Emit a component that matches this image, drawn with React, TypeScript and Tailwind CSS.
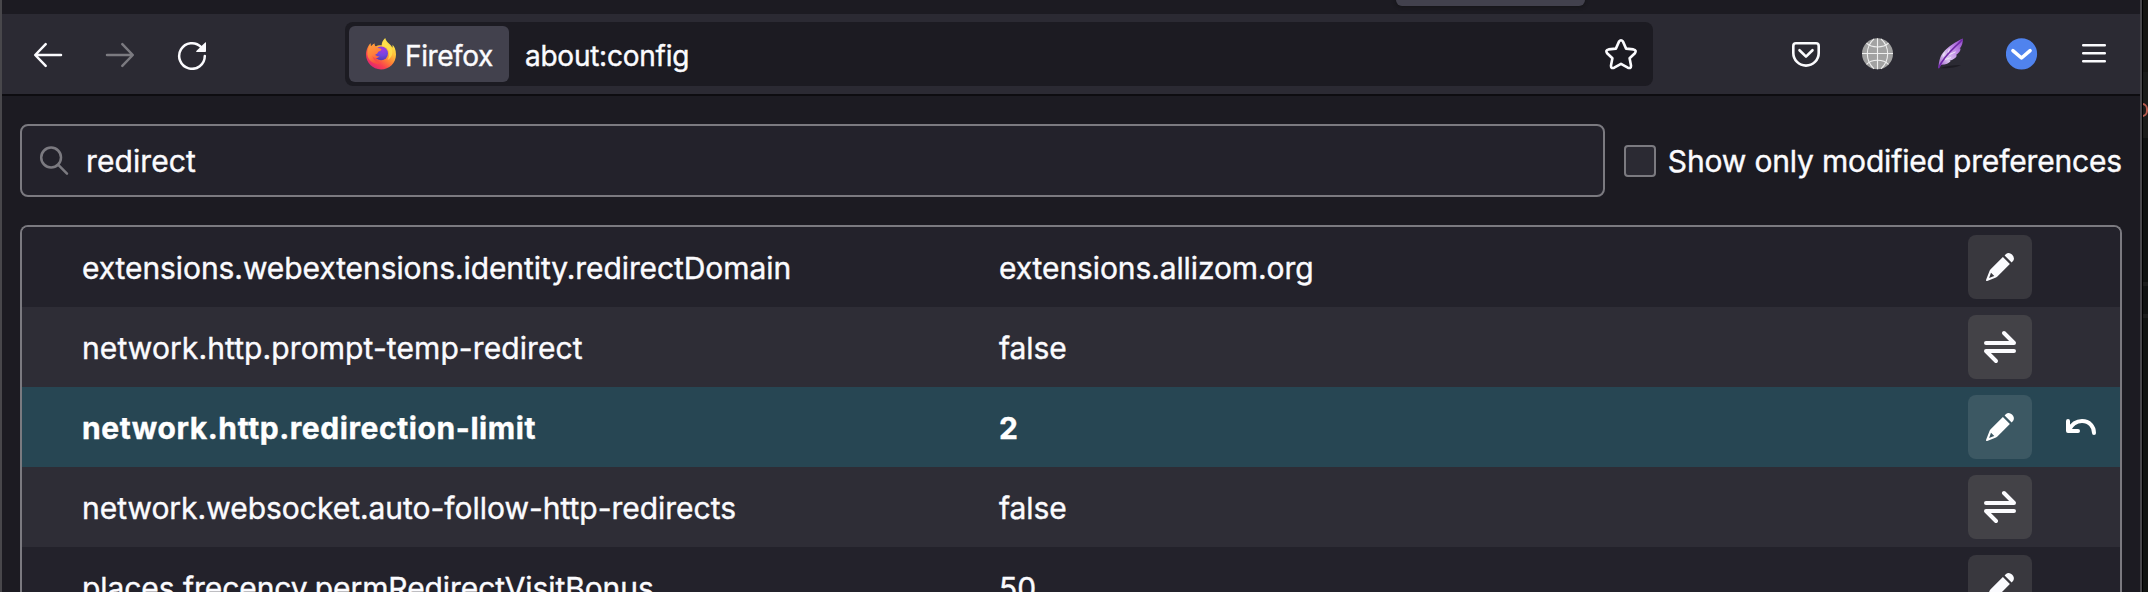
import React from 'react';

type Kind = 'edit' | 'toggle';

interface Pref {
  name: string;
  value: string;
  kind: Kind;
  modified?: boolean;
  spacing: string;
}

const prefs: Pref[] = [
  { name: 'extensions.webextensions.identity.redirectDomain', value: 'extensions.allizom.org', kind: 'edit', spacing: 'tracking-[-0.08px]' },
  { name: 'network.http.prompt-temp-redirect', value: 'false', kind: 'toggle', spacing: 'tracking-[0.1px]' },
  { name: 'network.http.redirection-limit', value: '2', kind: 'edit', modified: true, spacing: 'tracking-[0.58px]' },
  { name: 'network.websocket.auto-follow-http-redirects', value: 'false', kind: 'toggle', spacing: 'tracking-[-0.02px]' },
  { name: 'places.frecency.permRedirectVisitBonus', value: '50', kind: 'edit', spacing: 'tracking-[-0.08px]' },
];

function BackIcon() {
  return (
    <svg className="size-8" viewBox="0 0 32 32" fill="none" stroke="currentColor" strokeWidth="2.5" strokeLinecap="round" strokeLinejoin="round">
      <path d="M29 17H3.5M13.7 6.2L3.2 17L13.7 27.8" />
    </svg>
  );
}

function ForwardIcon() {
  return (
    <svg className="size-8" viewBox="0 0 32 32" fill="none" stroke="currentColor" strokeWidth="2.5" strokeLinecap="round" strokeLinejoin="round">
      <path d="M3 17H28.5M18.3 6.2L28.8 17L18.3 27.8" />
    </svg>
  );
}

function ReloadIcon() {
  return (
    <svg className="size-8" viewBox="0 0 32 32" fill="none">
      <path d="M28.8 18A12.8 12.8 0 1 1 25.2 9.1" stroke="currentColor" strokeWidth="2.5" strokeLinecap="round" />
      <path d="M20.8 14H29.2Q30 14 30 13.2V4.6Q30 3.8 29.2 4.5L20.3 12.9Q19.6 14 20.8 14Z" fill="currentColor" />
    </svg>
  );
}

function FirefoxLogo() {
  return (
    <svg className="h-8 w-[30px]" viewBox="0 0 30 32">
      <defs>
        <linearGradient id="ff-body" x1="0.85" y1="0.05" x2="0.2" y2="0.95">
          <stop offset="0" stopColor="#fff44f" />
          <stop offset="0.32" stopColor="#ffc13a" />
          <stop offset="0.55" stopColor="#ff8235" />
          <stop offset="0.78" stopColor="#f9404f" />
          <stop offset="1" stopColor="#dd2276" />
        </linearGradient>
        <radialGradient id="ff-globe" cx="0.6" cy="0.2" r="0.9">
          <stop offset="0" stopColor="#a438e0" />
          <stop offset="0.5" stopColor="#7245de" />
          <stop offset="1" stopColor="#4a3aa8" />
        </radialGradient>
        <linearGradient id="ff-fox" x1="0" y1="0" x2="0.4" y2="1">
          <stop offset="0" stopColor="#ffa53d" />
          <stop offset="0.6" stopColor="#ff7f3c" />
          <stop offset="1" stopColor="#f9503f" />
        </linearGradient>
      </defs>
      <path d="M19.2 0C17 2 15.5 5 15.7 7.3C12.5 7.2 11 7.6 9.8 8.6C8.8 8 8.2 6.6 8.4 5.4C6.9 6.2 5.8 7.5 5.1 8.6C4.5 7.8 4.5 6 4.6 5.2C2.6 7 0 11.5 0 16.6C0 24.9 6.7 31.4 15 31.4C23.3 31.4 30 24.8 30 16.4C30 11.6 28.2 8.4 26.5 6.8C26.7 7.8 26.7 8.8 26.4 9.7C24.3 5.4 20.2 4.6 19.2 0Z" fill="url(#ff-body)" />
      <circle cx="15.2" cy="15.4" r="6.8" fill="url(#ff-globe)" />
      <path d="M4.7 5.3C4.3 7 4.7 8.2 5.1 8.6C5.8 7.5 6.9 6.2 8.4 5.4C8.2 6.6 8.8 8 9.8 8.6C11.5 10.6 15.6 10.6 15.4 11.4C15.2 13 12.7 13.1 12 14.1C11.8 15.7 10.6 16.2 9 17C10.3 17.3 11.6 18.8 13.6 18.2C10.8 21.4 7.2 20 6.4 17.6C7 22.6 11.8 25.2 16 24.6C10 27.6 2.4 24 1.4 16.8C1 12.2 2.8 8 4.7 5.3Z" fill="url(#ff-fox)" />
      <path d="M19 1C16.6 3.4 16 6 16.4 8.4C19.5 8 24.4 12 23 18C22.6 20 22 21.4 21.4 22C26.6 19.4 27.9 13 24.7 9.4C22.2 6.5 19.6 5 19 1Z" fill="#ffe14d" opacity="0.85" />
    </svg>
  );
}

function StarIcon() {
  return (
    <svg className="size-8" viewBox="0 0 32 32" fill="none" stroke="currentColor" strokeWidth="2.6" strokeLinejoin="round">
      <path d="M14 3.6Q16 .8 18 3.6L21.1 10.6L28.4 11.4Q31.9 12.2 29.9 15.2L24.6 20.3L26 27.6Q26.2 31 22.8 29.7L16 25.9L9.2 29.7Q5.8 31 6 27.6L7.4 20.3L2.1 15.2Q.1 12.2 3.6 11.4L10.9 10.6Z" />
    </svg>
  );
}

function PocketIcon() {
  return (
    <svg className="size-8" viewBox="0 0 32 32" fill="none" stroke="currentColor" strokeWidth="2.6" strokeLinecap="round" strokeLinejoin="round">
      <path d="M6 5.3H26Q28.7 5.3 28.7 8V15A12.7 12.6 0 0 1 3.3 15V8Q3.3 5.3 6 5.3Z" />
      <path d="M9.5 12.2L16 18.6L22.5 12.2" />
    </svg>
  );
}

function GlobeIcon() {
  return (
    <svg className="size-8" viewBox="0 0 32 32" fill="none" stroke="#efefef" strokeWidth="1.1">
      <circle cx="15.5" cy="15.8" r="15.5" fill="#a2a2a2" stroke="none" />
      <path d="M15.5 .3V31.3M0 15.5H31" />
      <path d="M12 .9C3.1 9 3.1 22.5 12 30.8M19 .9C27.9 9 27.9 22.5 19 30.8" />
      <path d="M4.5 5.2C9.5 10.2 21.5 10.2 26.5 5.2M4.5 26.4C9.5 20.8 21.5 20.8 26.5 26.4" />
    </svg>
  );
}

function FeatherIcon() {
  return (
    <svg className="size-8" viewBox="0 0 32 32" fill="none">
      <defs>
        <linearGradient id="feather" x1="1" y1="0" x2="0" y2="1">
          <stop offset="0" stopColor="#8e44c4" />
          <stop offset="0.35" stopColor="#c08ae6" />
          <stop offset="0.65" stopColor="#dcc8ef" />
          <stop offset="1" stopColor="#8a3fc0" />
        </linearGradient>
      </defs>
      <path d="M6 30C12 30.6 22 29.8 27 27C20 27 12 28 6 30Z" fill="#1d1c23" />
      <path d="M28.7 .6C22 3.6 14 9 9.2 14.4C5.4 19 5 24 4.2 30.8L7.4 26.8C12 26.4 15 25.2 16.6 23.2L15.6 22.8C19 21.8 21.6 20.2 23 17.4L21.8 17.2C25 15 26.4 13.4 26.6 10.6L25.6 10.8C28 8.4 29.2 4.2 28.7 .6Z" fill="url(#feather)" />
      <path d="M28.4 1.4C22 9 10.6 16 4.6 30" stroke="#6f27a8" strokeWidth="1.5" />
      <path d="M11 21.5L17 19.6M15.4 16.6L21.6 13.8M9 18.5L10.5 14.6M14.4 14.4L15.4 10.6" stroke="#f0e6f8" strokeWidth="1" />
    </svg>
  );
}

function ChevronBadgeIcon() {
  return (
    <svg className="size-8" viewBox="0 0 32 32" fill="none">
      <circle cx="15.5" cy="15.9" r="15.6" fill="#5083ee" />
      <path d="M6.9 12.6L15.5 20L24.1 12.6" stroke="#fff" strokeWidth="3.5" strokeLinecap="round" strokeLinejoin="round" />
    </svg>
  );
}

function MenuIcon() {
  return (
    <svg className="size-8" viewBox="0 0 32 32" stroke="currentColor" strokeWidth="2.5" strokeLinecap="round">
      <path d="M5.2 7.2H26.8M5.2 15.2H26.8M5.2 23.3H26.8" />
    </svg>
  );
}

function SearchIcon() {
  return (
    <svg className="size-8 text-[#7b7a80]" viewBox="0 0 32 32" fill="none" stroke="currentColor" strokeWidth="2.5" strokeLinecap="round">
      <circle cx="13.1" cy="12.5" r="9.9" />
      <path d="M20.3 19.8L29 28.6" />
    </svg>
  );
}

function PencilIcon() {
  return (
    <svg className="size-16" viewBox="0 0 64 64" fill="currentColor">
      <path d="M36.6 20.4L38 19Q41 16.9 44 19.6Q47.1 22.8 45.2 25.8L43.6 27.4Z" />
      <path fillRule="evenodd" d="M34.9 22.1L41.9 29.1L29.4 41.6Q28.8 42.2 28 42.5L19.2 45.9Q17.6 46.3 18.1 44.8L21.5 36Q21.8 35.2 22.4 34.6ZM23 37.7L21.1 42.9L26.3 41Z" />
    </svg>
  );
}

function ToggleIcon() {
  return (
    <svg className="size-16" viewBox="0 0 64 64" fill="none" stroke="currentColor" strokeWidth="4" strokeLinecap="round" strokeLinejoin="round">
      <path d="M18 28H46L36 18M46 36H18L28 46" />
    </svg>
  );
}

function ResetIcon() {
  return (
    <svg className="size-16" viewBox="0 0 64 64" fill="none" stroke="currentColor" strokeWidth="4" strokeLinecap="round" strokeLinejoin="round">
      <path d="M19 26V36H29" />
      <path d="M20 35C23 28.8 28 26 33 26C40.5 26 45 31.5 45 38" />
    </svg>
  );
}

function ToolbarButton({ children, dim }: { children: React.ReactNode; dim?: boolean }) {
  return (
    <button className={`flex size-16 items-center justify-center rounded-lg ${dim ? 'text-[#7b7a80]' : 'text-[#fbfbfe]'}`}>
      {children}
    </button>
  );
}

function Toolbar() {
  return (
    <div className="flex h-[82px] shrink-0 items-center border-b-2 border-[#0d0c10] bg-[#2b2a33] pl-[14px] pr-[14px]">
      <div className="flex gap-2">
        <ToolbarButton><BackIcon /></ToolbarButton>
        <ToolbarButton dim><ForwardIcon /></ToolbarButton>
        <ToolbarButton><ReloadIcon /></ToolbarButton>
      </div>
      <div className="ml-[121px] flex h-16 w-[1308px] items-center rounded-lg bg-[#1c1b22] pl-1 pr-4">
        <div className="flex h-14 w-[160px] items-center rounded-md bg-[#42414d] pl-[17px]">
          <FirefoxLogo />
          <span className="ml-[9px] pt-[3px] text-[28px] tracking-[-0.4px]">Firefox</span>
        </div>
        <span className="ml-4 flex-1 pt-[3px] text-[28px] tracking-[-0.25px]">about:config</span>
        <StarIcon />
      </div>
      <div className="ml-auto flex gap-2">
        <ToolbarButton><PocketIcon /></ToolbarButton>
        <ToolbarButton><GlobeIcon /></ToolbarButton>
        <ToolbarButton><FeatherIcon /></ToolbarButton>
        <ToolbarButton><ChevronBadgeIcon /></ToolbarButton>
        <ToolbarButton><MenuIcon /></ToolbarButton>
      </div>
    </div>
  );
}

function PrefRow({ pref, index }: { pref: Pref; index: number }) {
  const rowColor = pref.modified ? 'bg-[#274653] font-bold text-white' : index % 2 ? 'bg-[#2e2d36]' : 'bg-[#23222b]';
  const buttonColor = pref.modified ? 'bg-[#3c5863]' : index % 2 ? 'bg-[#434247]' : 'bg-[#39383e]';
  return (
    <div className={`flex h-20 shrink-0 items-center pl-[60px] ${rowColor}`}>
      <div className={`w-[917px] pt-[2px] ${pref.spacing}`}>{pref.name}</div>
      <div className="w-[969px] pt-[2px] tracking-[-0.1px]">{pref.value}</div>
      <button className={`size-16 rounded-lg ${buttonColor}`}>
        {pref.kind === 'edit' ? <PencilIcon /> : <ToggleIcon />}
      </button>
      {pref.modified && <button className="ml-[17px] size-16"><ResetIcon /></button>}
    </div>
  );
}

export default function App() {
  return (
    <div className="flex h-[592px] w-[2148px] overflow-hidden bg-[#111311] font-['Inter',sans-serif] text-[30px] leading-[40px] text-[#fbfbfe] [-webkit-text-stroke:0.4px]">
      <div className="flex w-[2142px] shrink-0 flex-col overflow-hidden border-x-2 border-[#48474b] bg-[#1c1b22]">
        <div className="h-[14px] shrink-0 pl-[1394px]">
          <div className="h-[6px] w-[189px] rounded-b-lg bg-[#42414d] shadow-[0_0_4px_#111]" />
        </div>
        <Toolbar />
        <div className="flex h-[129px] shrink-0 px-[18px] pt-7">
          <div className="flex h-[73px] w-[1585px] items-center rounded-lg border-2 border-[#7b7a80] bg-[#23222b] pl-4">
            <SearchIcon />
            <span className="ml-4 pt-px tracking-[0.1px]">redirect</span>
          </div>
          <div className="ml-[19px] flex h-[73px] items-center">
            <span className="size-8 rounded-[4px] border-2 border-[#7b7a80] bg-[#2b2a33]" />
            <span className="ml-3 whitespace-nowrap pt-px tracking-[-0.17px]">Show only modified preferences</span>
          </div>
        </div>
        <div className="mx-[18px] flex min-h-0 flex-1 flex-col overflow-hidden rounded-t-lg border-2 border-b-0 border-[#7b7a80]">
          {prefs.map((pref, index) => (
            <PrefRow key={pref.name} pref={pref} index={index} />
          ))}
        </div>
      </div>
      <div className="flex w-[6px] shrink-0 flex-col overflow-hidden border-l border-black">
        <div className="h-[72px] bg-[#151512]" />
        <div className="h-[66px] bg-[#1a1b19] pt-[31px]">
          <div className="-ml-[7px] h-[14px] w-3 rounded-full border-[2.5px] border-[#b85c4e]" />
        </div>
        <div className="h-[144px] bg-[#0f1110]" />
        <div className="h-1 bg-[#1b1c1b]" />
        <div className="h-7 bg-[#101211]" />
        <div className="h-1 bg-[#1b1c1b]" />
      </div>
    </div>
  );
}
